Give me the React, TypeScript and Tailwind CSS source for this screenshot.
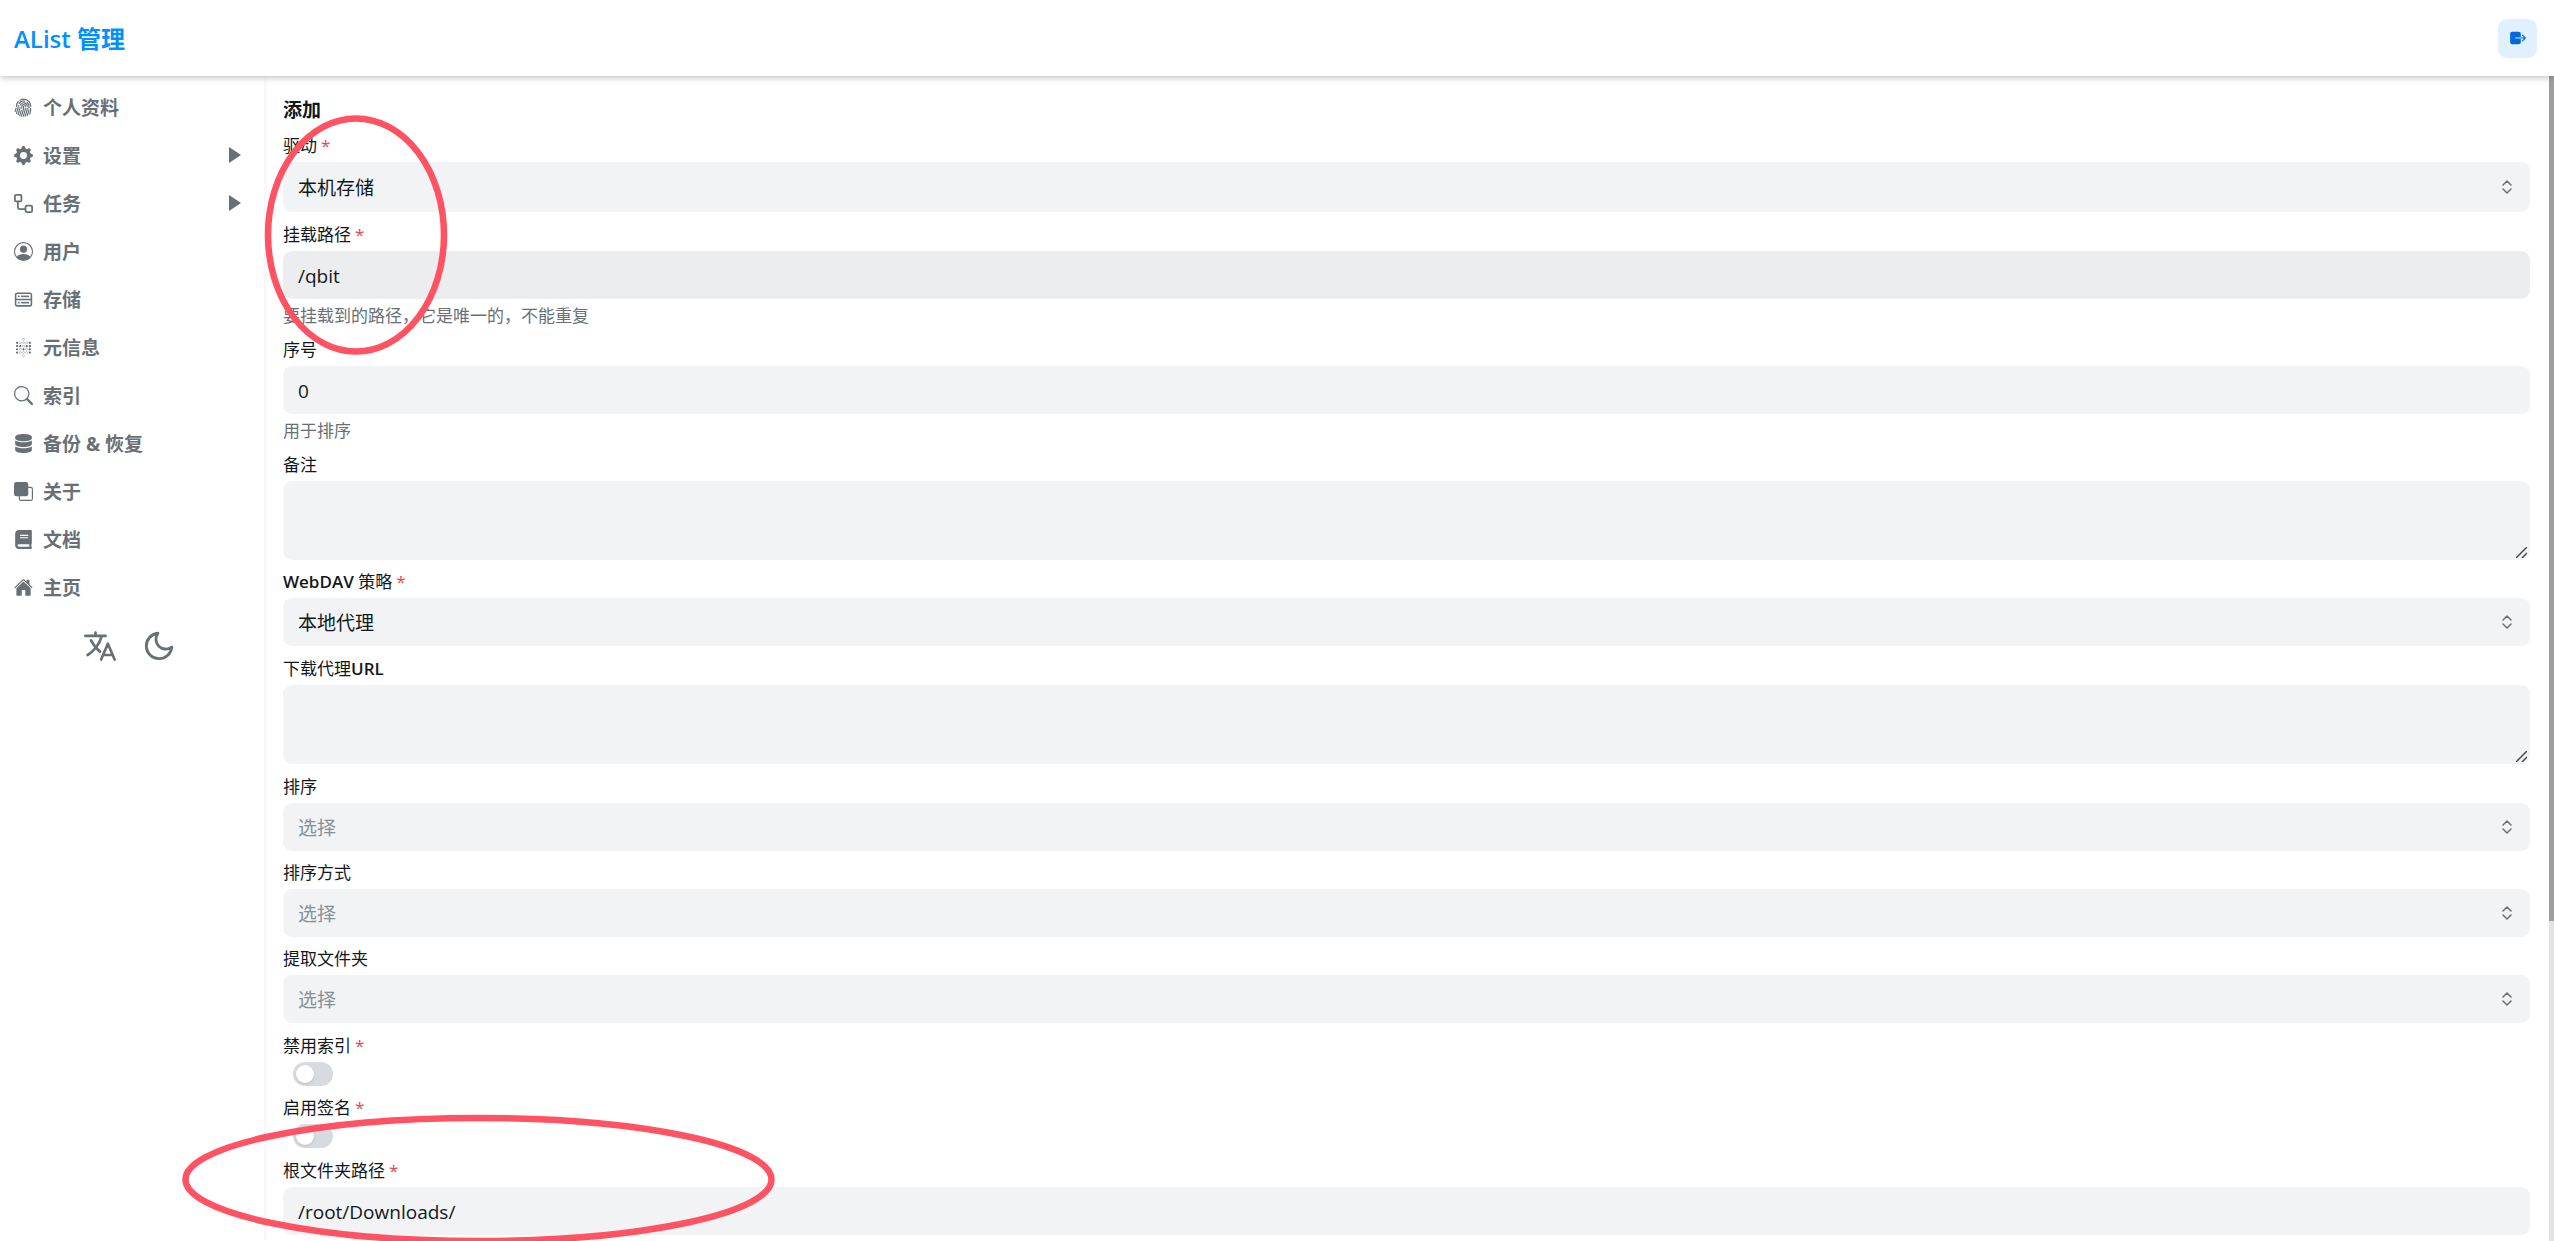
import type { ReactNode } from "react";
import type { IconType } from "react-icons";
import { BsFingerprint, BsFront, BsGearFill, BsPersonCircle, BsSearch } from "react-icons/bs";
import { CgDatabase } from "react-icons/cg";
import { FaBook, FaDatabase } from "react-icons/fa";
import { FiMoon } from "react-icons/fi";
import { IoExit, IoHome } from "react-icons/io5";
import { SiMetabase } from "react-icons/si";

type MenuIcon = IconType | (() => ReactNode);
type MenuItem = { title: string; icon: MenuIcon; expandable?: boolean };

function WorkflowIcon() {
  return (
    <svg width="19" height="19" viewBox="0 0 16 16" fill="currentColor">
      <path d="M0 1.75C0 .784.784 0 1.75 0h3.5C6.216 0 7 .784 7 1.75v3.5A1.75 1.75 0 0 1 5.25 7H4v4a1 1 0 0 0 1 1h4v-1.25C9 9.784 9.784 9 10.75 9h3.5c.966 0 1.75.784 1.75 1.75v3.5A1.75 1.75 0 0 1 14.25 16h-3.5A1.75 1.75 0 0 1 9 14.25v-.75H5A2.5 2.5 0 0 1 2.5 11V7h-.75A1.75 1.75 0 0 1 0 5.25Zm1.75-.25a.25.25 0 0 0-.25.25v3.5c0 .138.112.25.25.25h3.5a.25.25 0 0 0 .25-.25v-3.5a.25.25 0 0 0-.25-.25Zm9 9a.25.25 0 0 0-.25.25v3.5c0 .138.112.25.25.25h3.5a.25.25 0 0 0 .25-.25v-3.5a.25.25 0 0 0-.25-.25Z" />
    </svg>
  );
}

function LanguageIcon() {
  return (
    <svg
      width="36"
      height="36"
      viewBox="0 0 512 512"
      fill="none"
      stroke="currentColor"
      strokeWidth="38"
      strokeLinecap="round"
      strokeLinejoin="round"
    >
      <path d="M48 112h288M192 64v48M272 448l96-224 96 224M301.5 384h133M281.3 112S257 206 199 277 80 384 80 384" />
      <path d="M256 336s-35-27-72-75-56-85-56-85" />
    </svg>
  );
}

const menu: MenuItem[] = [
  { title: "个人资料", icon: BsFingerprint },
  { title: "设置", icon: BsGearFill, expandable: true },
  { title: "任务", icon: WorkflowIcon, expandable: true },
  { title: "用户", icon: BsPersonCircle },
  { title: "存储", icon: CgDatabase },
  { title: "元信息", icon: SiMetabase },
  { title: "索引", icon: BsSearch },
  { title: "备份 & 恢复", icon: FaDatabase },
  { title: "关于", icon: BsFront },
  { title: "文档", icon: FaBook },
  { title: "主页", icon: IoHome },
];

const control = "block w-full rounded-[9px] px-[15px] pt-[2px] text-[19px] outline-none";

function Header() {
  return (
    <header className="relative z-10 flex h-[76px] shrink-0 items-center justify-between bg-white pl-[14px] pr-[17px] shadow-[0_1px_7px_rgba(0,0,0,0.28)]">
      <a href="#home" className="pt-[2px] text-[24px] font-bold text-[#0091ff]">
        <span className="font-semibold">AList</span> 管理
      </a>
      <button
        aria-label="退出"
        className="flex size-[39px] items-center justify-center rounded-[9px] bg-[#e1f0ff] text-[#006adc]"
      >
        <IoExit size={18} />
      </button>
    </header>
  );
}

function Sidebar() {
  return (
    <aside className="w-[264px] shrink-0 pt-[7px] text-[#687076] shadow-[0_0_6px_rgba(0,0,0,0.08)]">
      <nav>
        {menu.map(({ title, icon: Icon, expandable }) => (
          <a
            key={title}
            href={`#${title}`}
            className="flex h-12 items-center pl-[14px] pr-[23px] text-[19px] font-bold"
          >
            <Icon size={19} />
            <span className="ml-[10px] flex-1 pt-[2px]">{title}</span>
            {expandable && (
              <svg width="12" height="16" viewBox="0 0 12 16" fill="currentColor">
                <path d="M0 0 12 8 0 16Z" />
              </svg>
            )}
          </a>
        ))}
      </nav>
      <div className="mt-[17px] flex items-center justify-center gap-6 pr-[7px]">
        <button aria-label="语言">
          <LanguageIcon />
        </button>
        <button aria-label="深色模式">
          <FiMoon size={34} />
        </button>
      </div>
    </aside>
  );
}

type FieldProps = {
  id: string;
  label: ReactNode;
  required?: boolean;
  help?: string;
  className?: string;
  children: ReactNode;
};

function Field({ id, label, required, help, className = "mt-[10px]", children }: FieldProps) {
  return (
    <div className={className}>
      <label htmlFor={id} className="mb-1 block text-[17px] leading-6 text-[#11181c]">
        {label}
        {required && <span className="ml-1 text-[#e5484d]">*</span>}
      </label>
      {children}
      {help && <p className="mt-[6px] text-[17px] leading-[22px] text-[#687076]">{help}</p>}
    </div>
  );
}

function SelectBox({ id, value, tall }: { id: string; value?: string; tall?: boolean }) {
  return (
    <div className="relative">
      <select
        id={id}
        className={`${control} appearance-none bg-[#f1f3f5] ${tall ? "h-[50px]" : "h-12"} ${value ? "text-[#11181c]" : "text-[#889096]"}`}
      >
        <option>{value ?? "选择"}</option>
      </select>
      <svg
        className="pointer-events-none absolute inset-y-0 right-[18px] my-auto"
        width="10"
        height="14"
        viewBox="0 0 10 14"
        fill="none"
        stroke="#687076"
        strokeWidth="1.5"
        strokeLinecap="round"
        strokeLinejoin="round"
      >
        <path d="M1 5 5 1l4 4M1 9l4 4 4-4" />
      </svg>
    </div>
  );
}

function TextBox({ id }: { id: string }) {
  return (
    <div className="relative">
      <textarea id={id} className={`${control} h-[79px] resize-none bg-[#f1f3f5] text-[#11181c]`} />
      <svg
        className="pointer-events-none absolute bottom-[2px] right-[3px]"
        width="11"
        height="11"
        viewBox="0 0 11 11"
        fill="none"
        stroke="#4a4a4a"
        strokeWidth="1.5"
      >
        <path d="M0 11 11 0M6 11l5-5" />
      </svg>
    </div>
  );
}

function Toggle({ id }: { id: string }) {
  return (
    <input
      id={id}
      type="checkbox"
      role="switch"
      className="ml-[10px] block h-6 w-10 appearance-none rounded-full bg-[#d7dbdf] before:ml-[3px] before:mt-[3px] before:block before:size-[18px] before:rounded-full before:bg-white before:shadow-sm"
    />
  );
}

function StorageForm() {
  return (
    <main className="min-w-0 flex-1 pl-[19px] pr-[10px] pt-5">
      <h1 className="text-[19px] font-bold leading-7 text-[#11181c]">添加</h1>
      <form>
        <Field id="driver" label="驱动" required>
          <SelectBox id="driver" value="本机存储" tall />
        </Field>
        <Field
          id="mount_path"
          label="挂载路径"
          required
          help="要挂载到的路径，它是唯一的，不能重复"
          className="mt-[11px]"
        >
          <input
            id="mount_path"
            className={`${control} h-12 bg-[#ecedee] text-[#11181c]`}
            defaultValue="/qbit"
          />
        </Field>
        <Field id="order" label="序号" help="用于排序" className="mt-[11px]">
          <input
            id="order"
            className={`${control} h-12 bg-[#f1f3f5] text-[#11181c]`}
            defaultValue="0"
          />
        </Field>
        <Field id="remark" label="备注" className="mt-[11px]">
          <TextBox id="remark" />
        </Field>
        <Field
          id="webdav_policy"
          label={
            <>
              <span className="font-semibold">WebDAV</span> 策略
            </>
          }
          required
        >
          <SelectBox id="webdav_policy" value="本地代理" />
        </Field>
        <Field
          id="down_proxy_url"
          label={
            <>
              下载代理<span className="font-semibold">URL</span>
            </>
          }
          className="mt-[11px]"
        >
          <TextBox id="down_proxy_url" />
        </Field>
        <Field id="order_by" label="排序" className="mt-[11px]">
          <SelectBox id="order_by" />
        </Field>
        <Field id="order_direction" label="排序方式">
          <SelectBox id="order_direction" />
        </Field>
        <Field id="extract_folder" label="提取文件夹">
          <SelectBox id="extract_folder" />
        </Field>
        <Field id="disable_index" label="禁用索引" required className="mt-[11px]">
          <Toggle id="disable_index" />
        </Field>
        <Field id="enable_sign" label="启用签名" required>
          <Toggle id="enable_sign" />
        </Field>
        <Field id="root_folder_path" label="根文件夹路径" required className="mt-[11px]">
          <input
            id="root_folder_path"
            className={`${control} h-12 bg-[#f1f3f5] text-[#11181c]`}
            defaultValue="/root/Downloads/"
          />
        </Field>
      </form>
    </main>
  );
}

// hand-drawn style marks that float over the page
function Marks() {
  return (
    <svg
      className="pointer-events-none absolute inset-0 z-20 size-full"
      fill="none"
      stroke="#ff5263"
      strokeWidth="6.5"
    >
      <ellipse cx="356" cy="235" rx="88" ry="116.5" />
      <ellipse cx="478.5" cy="1179.5" rx="293" ry="61.5" />
    </svg>
  );
}

export default function App() {
  return (
    <div className="relative flex h-screen flex-col overflow-hidden bg-white font-['Open_Sans','Noto_Sans_CJK_SC',sans-serif]">
      <Header />
      <div className="flex min-h-0 flex-1">
        <Sidebar />
        <StorageForm />
        <div className="ml-[9px] w-[5px] shrink-0 bg-[#e2e2e2]">
          <div className="h-[845px] bg-[#9e9e9e]" />
        </div>
      </div>
      <Marks />
    </div>
  );
}
